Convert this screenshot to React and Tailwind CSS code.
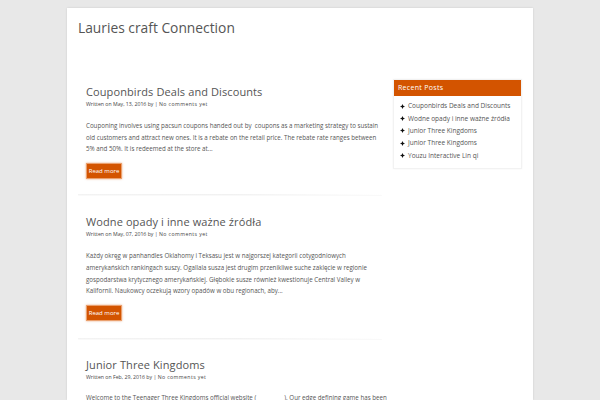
import React from "react";

const F = { fontFamily: '"Open Sans", "Noto Sans", sans-serif' };

function Bullet() {
  return (
    <svg width="5" height="5" viewBox="0 0 10 10" className="shrink-0">
      <path d="M5 0 L6.6 3.4 L10 5 L6.6 6.6 L5 10 L3.4 6.6 L0 5 L3.4 3.4 Z" fill="#111" />
    </svg>
  );
}

function ReadMore() {
  return (
    <div className="mt-[6px] inline-flex h-[16px] w-[36px] items-center justify-center bg-[#d35400] border border-[#eaa06e] shadow-[0_0_2px_rgba(211,84,0,0.5)] text-white text-[6px] leading-none">
      Read more
    </div>
  );
}

function Separator() {
  return <div className="h-px bg-gradient-to-r from-[#f3f3f3] via-[#f1f1f1] to-transparent shadow-[0_1px_1px_rgba(0,0,0,0.03)]" />;
}

function Post({ title, date, lines, button = true, titleTop }) {
  return (
    <div className={`pl-[8px] ${titleTop}`}>
      <h2 className="text-[11px] leading-[16px] text-[#555] tracking-[0.1px]">{title}</h2>
      <div className="text-[5.2px] leading-[8px] text-[#444]">
        Written on {date} by | <span className="tracking-[0.4px]">No comments yet</span>
      </div>
      <div className="mt-[12px] text-[6.2px] leading-[11.7px] text-[#555]">
        {lines.map((l, i) => (
          <div key={i} className="whitespace-pre">{l}</div>
        ))}
      </div>
      {button && <ReadMore />}
    </div>
  );
}

export default function App() {
  const recent = [
    "Couponbirds Deals and Discounts",
    "Wodne opady i inne ważne źródła",
    "Junior Three Kingdoms",
    "Junior Three Kingdoms",
    "Youzu Interactive Lin qi",
  ];
  return (
    <div className="h-[400px] bg-[#e8e8e8] overflow-hidden" style={F}>
      <div className="ml-[67px] mt-[8px] w-[466px] h-[392px] bg-white shadow-[0_0_2px_rgba(0,0,0,0.12)] px-[11px] pt-[10px] overflow-hidden">
        <h1 className="text-[13.8px] leading-[20px] text-[#555]">Lauries craft Connection</h1>
        <div className="mt-[41px] flex gap-[11px]">
          <div className="w-[304px]">
            <Post
              titleTop="pt-[5px]"
              title="Couponbirds Deals and Discounts"
              date="May, 13, 2016"
              lines={[
                "Couponing involves using pacsun coupons handed out by  coupons as a marketing strategy to sustain",
                "old customers and attract new ones. It is a rebate on the retail price. The rebate rate ranges between",
                "5% and 50%. It is redeemed at the store at...",
              ]}
            />
            <div className="mt-[15px]"><Separator /></div>
            <Post
              titleTop="pt-[19px]"
              title="Wodne opady i inne ważne źródła"
              date="May, 07, 2016"
              lines={[
                "Każdy okręg w panhandles Oklahomy i Teksasu jest w najgorszej kategorii cotygodniowych",
                "amerykańskich rankingach suszy. Ogallala susza jest drugim przenikliwe suche zaklęcie w regionie",
                "gospodarstwa krytycznego amerykańskiej. Głębokie susze również kwestionuje Central Valley w",
                "Kalifornii. Naukowcy oczekują wzory opadów w obu regionach, aby...",
              ]}
            />
            <div className="mt-[17px]"><Separator /></div>
            <div className="pl-[8px] pt-[18px]">
              <h2 className="text-[11px] leading-[16px] text-[#555] tracking-[0.1px]">Junior Three Kingdoms</h2>
              <div className="text-[5.2px] leading-[8px] text-[#444]">
                Written on Feb, 29, 2016 by | <span className="tracking-[0.4px]">No comments yet</span>
              </div>
              <div className="mt-[11px] text-[6.2px] leading-[11.7px] text-[#555] whitespace-pre">
                Welcome to the Teenager Three Kingdoms official website (<span className="inline-block w-[28px]" />). Our edge defining game has been
              </div>
            </div>
          </div>
          <div className="w-[133px] self-start border border-[#f2f2f2] shadow-[0_0_2px_rgba(0,0,0,0.05)]">
            <div className="h-[16px] bg-[#d35400] px-[4px] flex items-center text-white text-[7px] tracking-[0.3px]">
              Recent Posts
            </div>
            <ul className="pt-[4px] pb-[6px] pl-[6px]">
              {recent.map((r, i) => (
                <li key={i} className="flex items-center gap-[3px] h-[12.4px] text-[6.5px] text-[#555]">
                  <Bullet />
                  <span>{r}</span>
                </li>
              ))}
            </ul>
          </div>
        </div>
      </div>
    </div>
  );
}
